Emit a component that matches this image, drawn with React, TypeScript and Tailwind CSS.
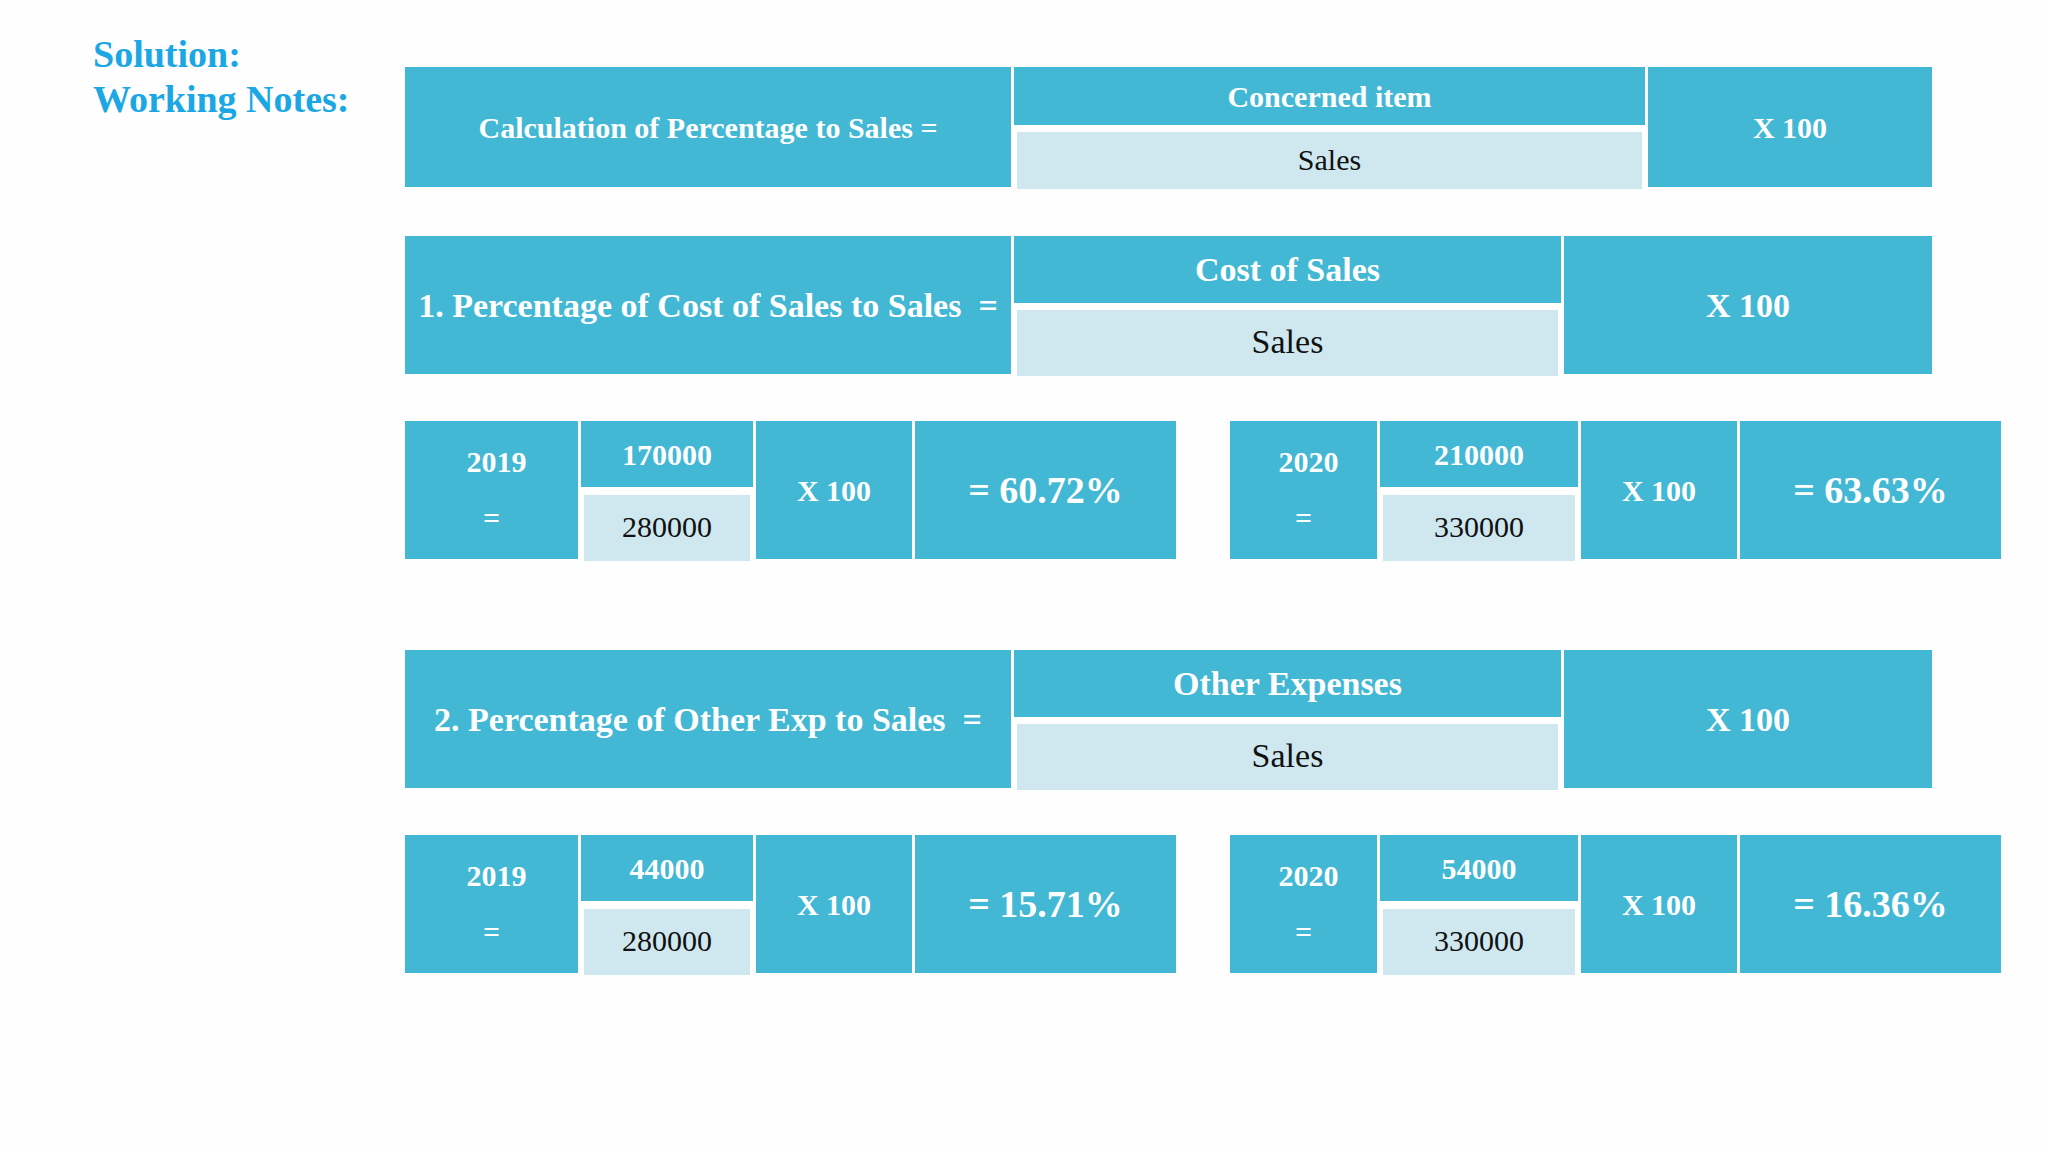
import React from "react";

const TEAL = "bg-[#42b8d4]";

function Cell({
  className = "",
  children,
}: {
  className?: string;
  children: React.ReactNode;
}) {
  return (
    <div
      className={`${TEAL} flex shrink-0 items-center justify-center font-bold text-white ${className}`}
    >
      {children}
    </div>
  );
}

function Fraction({
  top,
  bottom,
  className,
  topClass,
  textClass,
  gapClass,
}: {
  top: string;
  bottom: string;
  className: string;
  topClass: string;
  textClass: string;
  gapClass: string;
}) {
  return (
    <div className={`flex shrink-0 flex-col ${className}`}>
      <div className={`${TEAL} flex items-center justify-center font-bold text-white ${topClass} ${textClass}`}>
        {top}
      </div>
      <div
        className={`relative -mx-[3px] -mb-[2px] flex flex-1 items-center justify-center border-[6px] border-b-0 border-white bg-[#cfe7ee] pb-[3px] text-[#111] ${gapClass} ${textClass}`}
      >
        {bottom}
      </div>
    </div>
  );
}

function FormulaBox({ label, top }: { label: string; top: string }) {
  return (
    <div className="flex h-[138px] gap-[3px]">
      <Cell className="w-[606px] text-[34px] whitespace-pre">{label}</Cell>
      <Fraction
        top={top}
        bottom="Sales"
        className="w-[547px]"
        topClass="h-[67px]"
        textClass="text-[34px]"
        gapClass="border-t-[7px]"
      />
      <Cell className="w-[368px] text-[34px]">X 100</Cell>
    </div>
  );
}

function YearGroup({
  year,
  num,
  den,
  result,
  widths,
}: {
  year: string;
  num: string;
  den: string;
  result: string;
  widths: [string, string, string];
}) {
  return (
    <div className="flex h-[138px] gap-[3px]">
      <Cell className={`${widths[0]} flex-col gap-[26px] text-[30px] leading-[30px]`}>
        <span className="ml-[10px]">{year}</span>
        <span>=</span>
      </Cell>
      <Fraction
        top={num}
        bottom={den}
        className={widths[1]}
        topClass="h-[66px]"
        textClass="text-[30px]"
        gapClass="border-t-[8px]"
      />
      <Cell className={`${widths[2]} text-[30px]`}>X 100</Cell>
      <Cell className="w-[261px] text-[38px]">{result}</Cell>
    </div>
  );
}

function YearRow({ rows }: { rows: [string, string, string, string][] }) {
  return (
    <div className="flex gap-[54px]">
      <YearGroup
        year={rows[0][0]}
        num={rows[0][1]}
        den={rows[0][2]}
        result={rows[0][3]}
        widths={["w-[173px]", "w-[172px]", "w-[156px]"]}
      />
      <YearGroup
        year={rows[1][0]}
        num={rows[1][1]}
        den={rows[1][2]}
        result={rows[1][3]}
        widths={["w-[147px]", "w-[198px]", "w-[156px]"]}
      />
    </div>
  );
}

export default function App() {
  return (
    <div
      className="flex h-[1152px] w-[2048px] overflow-hidden bg-[#fefefe]"
      style={{ fontFamily: '"Liberation Serif", "Times New Roman", serif' }}
    >
      <div className="w-[405px] shrink-0 pl-[93px] pt-[32px] text-[38px] font-bold leading-[45px] text-[#1aa7e4]">
        <div>Solution:</div>
        <div>Working Notes:</div>
      </div>

      <div className="flex flex-col pt-[67px]">
        <div className="flex h-[120px] gap-[3px]">
          <Cell className="w-[606px] text-[30px]">Calculation of Percentage to Sales =</Cell>
          <Fraction
            top="Concerned item"
            bottom="Sales"
            className="w-[631px]"
            topClass="h-[58px]"
            textClass="text-[30px]"
            gapClass="border-t-[7px]"
          />
          <Cell className="w-[284px] text-[30px]">X 100</Cell>
        </div>

        <div className="mt-[49px]">
          <FormulaBox label={"1. Percentage of Cost of Sales to Sales  ="} top="Cost of Sales" />
        </div>

        <div className="mt-[47px]">
          <YearRow
            rows={[
              ["2019", "170000", "280000", "= 60.72%"],
              ["2020", "210000", "330000", "= 63.63%"],
            ]}
          />
        </div>

        <div className="mt-[91px]">
          <FormulaBox label={"2. Percentage of Other Exp to Sales  ="} top="Other Expenses" />
        </div>

        <div className="mt-[47px]">
          <YearRow
            rows={[
              ["2019", "44000", "280000", "= 15.71%"],
              ["2020", "54000", "330000", "= 16.36%"],
            ]}
          />
        </div>
      </div>
    </div>
  );
}
